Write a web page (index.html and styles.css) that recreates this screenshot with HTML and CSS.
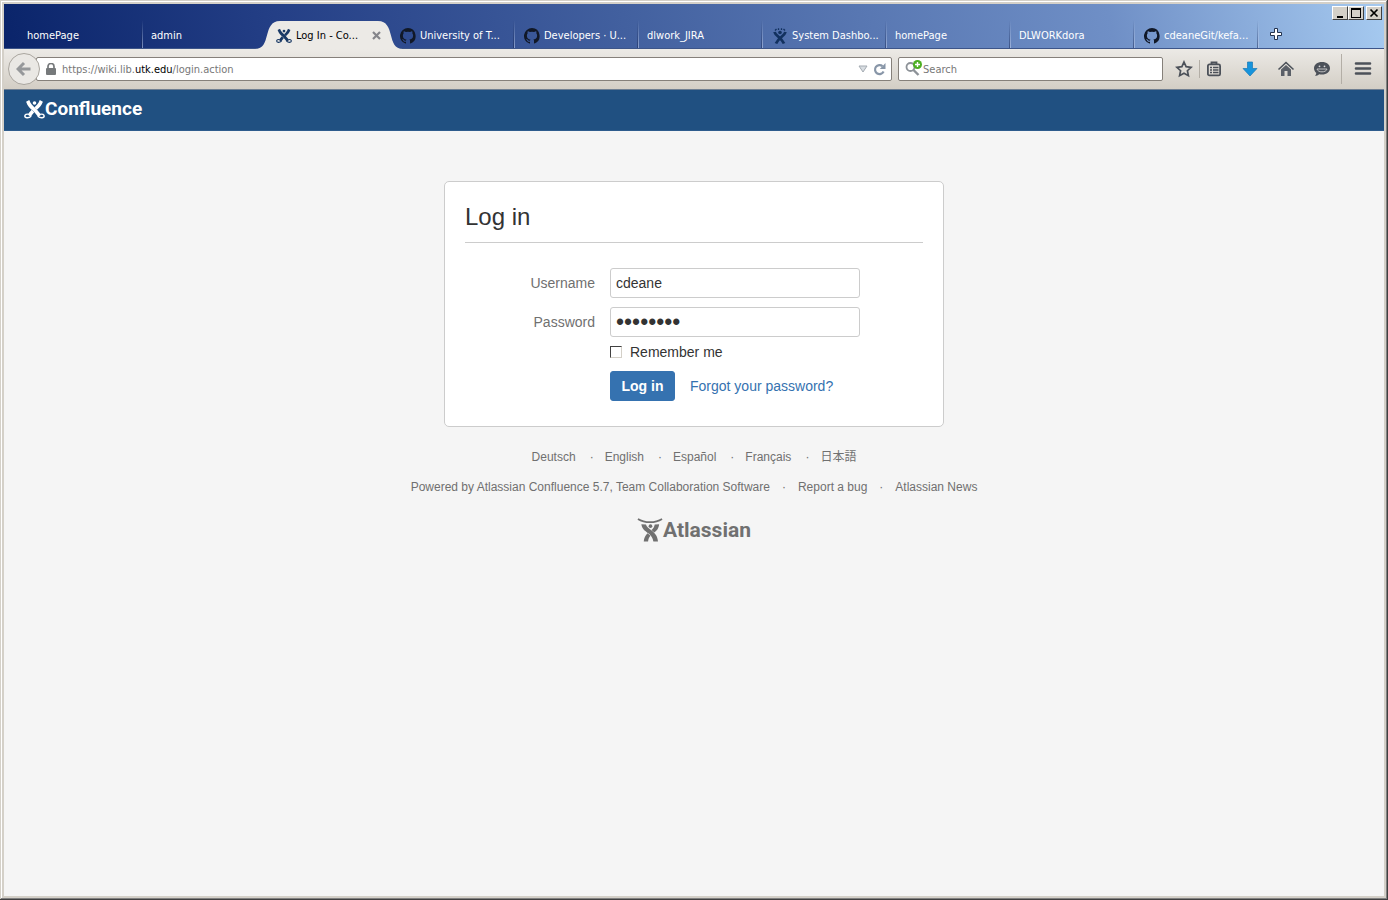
FILE: index.html
```
<!DOCTYPE html>
<html lang="en">
<head>
<meta charset="utf-8">
<title>Log In - Confluence</title>
<link rel="stylesheet" href="styles.css">
</head>
<body>
<svg class="defs" aria-hidden="true">
  <symbol id="github" viewBox="0 0 16 16"><path fill="#111827" d="M8 0a8 8 0 0 0-2.5 15.6c.4.1.5-.2.5-.4v-1.5c-2.200.5-2.700-1-2.700-1-.4-.9-.9-1.200-.9-1.200-.7-.5.1-.5.1-.5.8.1 1.200.8 1.200.8.7 1.300 1.900.9 2.300.7.1-.5.3-.9.5-1.100-1.800-.2-3.600-.9-3.600-4 0-.9.3-1.600.8-2.100-.1-.2-.4-1 .1-2.100 0 0 .7-.2 2.200.8a7.500 7.500 0 0 1 4 0c1.500-1 2.200-.8 2.200-.8.4 1.100.2 1.900.1 2.100.5.6.8 1.300.8 2.100 0 3.100-1.900 3.700-3.700 3.900.3.300.6.8.6 1.500v2.200c0 .2.100.5.600.4A8 8 0 0 0 8 0z"/></symbol>
  <symbol id="confluence" viewBox="0 0 20 18"><g fill="currentColor"><path d="M2 1.500L5 0c1.500 4 3.500 5.300 6 7.800 2.200 2.200 3.500 3.700 5.300 6.200l-2.800 2.200c-1.700-2.600-3-4-5-6C5.500 7.600 3.500 5.800 2 1.500z"/><path d="M18 1.500L15 0c-1.300 3.600-3 5-5 6.800l2.300 2.400C15 6.900 16.700 5 18 1.500zM7.300 9.200C5.800 10.700 4.800 12 3.700 14l2.800 2.200c1-1.800 1.900-3 3.200-4.500z"/><circle cx="10" cy="2.800" r="1.700"/></g><path d="M4.500 13.600C2.500 13 .8 14 .8 15.200c0 2 3.600 2.500 6 .2M15.500 13.600c2-.6 3.700.4 3.700 1.600 0 2-3.600 2.500-6 .2" fill="none" stroke="currentColor" stroke-width="1.400"/></symbol>
</svg>
<div class="window">
  <header class="titlebar">
    <nav class="tabs" aria-label="Tabs">
      <a class="tab" href="#"><span>homePage</span></a>
      <a class="tab" href="#"><span>admin</span></a>
      <a class="tab active" href="#">
        <svg class="tab-shape" viewBox="0 0 150 29"><path d="M0 29C17 29 7 1 25 1H123C141 1 131 29 148 29Z" fill="#eceae6"/></svg>
        <svg class="favicon navy" viewBox="0 0 20 18"><use href="#confluence"/></svg>
        <span>Log In - Co...</span>
        <svg class="close" viewBox="0 0 9 9"><path d="M1 1l7 7M8 1l-7 7" stroke="#85858a" stroke-width="2.200"/></svg>
      </a>
      <a class="tab" href="#"><svg class="favicon"><use href="#github"/></svg><span>University of T...</span></a>
      <a class="tab" href="#"><svg class="favicon"><use href="#github"/></svg><span>Developers · U...</span></a>
      <a class="tab" href="#"><span>dlwork_JIRA</span></a>
      <a class="tab" href="#"><svg class="favicon" viewBox="0 0 16 16"><g fill="none" stroke="#12315f" stroke-width="2.800"><path d="M2.500 4C3.500 8 9.500 9.500 12 15.500"/><path d="M13.500 4C12.500 8 6.500 9.500 4 15.500"/></g><path d="M3 2.500l1.500-1.500M6.500 2V.3M9.500 2V.3M13 2.500l-1.500-1.500" stroke="#12315f" stroke-width="1.300"/><circle cx="8" cy="4.500" r="1.800" fill="#12315f"/></svg><span>System Dashbo...</span></a>
      <a class="tab" href="#"><span>homePage</span></a>
      <a class="tab" href="#"><span>DLWORKdora</span></a>
      <a class="tab" href="#"><svg class="favicon"><use href="#github"/></svg><span>cdeaneGit/kefa...</span></a>
      <button class="newtab" aria-label="New tab"><svg width="12" height="12" viewBox="0 0 12 12"><path d="M4.500.5h3v4h4v3h-4v4h-3v-4h-4v-3h4z" fill="#fff" stroke="#23334f"/></svg></button>
    </nav>
    <div class="controls">
      <button aria-label="Minimize"><svg viewBox="0 0 14 12"><path d="M4 9h6v2H4z"/></svg></button>
      <button aria-label="Maximize"><svg viewBox="0 0 14 12"><path fill-rule="evenodd" d="M2 1h10v10H2zM3 3v7h8V3z"/></svg></button>
      <button class="quit" aria-label="Close"><svg viewBox="0 0 14 12"><path d="M3.500 2.500l7 7M10.500 2.500l-7 7" stroke="#000" stroke-width="1.700"/></svg></button>
    </div>
  </header>

  <div class="toolbar">
    <button class="back" aria-label="Back"><svg width="16" height="16" viewBox="0 0 16 16"><path d="M14.500 8H3M8 2L2 8l6 6" fill="none" stroke="#96989a" stroke-width="3"/></svg></button>
    <div class="address">
      <svg width="10" height="12" viewBox="0 0 10 12"><path d="M2 6V3.500a3 3 0 0 1 6 0V6" fill="none" stroke="#76797b" stroke-width="1.700"/><rect y="5" width="10" height="7" rx="1" fill="#76797b"/></svg>
      <a class="url" href="#">https://wiki.lib.<b>utk.edu</b>/login.action</a>
      <svg width="10" height="8" viewBox="0 0 10 8"><path d="M1 1h8L5 7z" fill="#d8dde2" stroke="#a4abb2"/></svg>
      <button class="plain" aria-label="Reload"><svg width="13" height="13" viewBox="0 0 13 13"><path d="M9.500 3.200A4.500 4.500 0 1 0 10.600 8.500" fill="none" stroke="#8896a8" stroke-width="2.200"/><path d="M12.500 0v6H6.800z" fill="#8896a8"/></svg></button>
    </div>
    <div class="search">
      <svg width="18" height="18" viewBox="0 0 18 18"><circle cx="5.500" cy="7" r="4" fill="none" stroke="#8d9298" stroke-width="1.800"/><path d="M8.500 10l5 5" stroke="#8d9298" stroke-width="2.400"/><circle cx="12.500" cy="4.500" r="4.500" fill="#4caf22"/><path d="M12.500 2v5M10 4.500h5" stroke="#fff" stroke-width="1.400"/></svg>
      <input type="search" placeholder="Search" aria-label="Search">
    </div>
    <div class="tools">
      <button class="plain" aria-label="Bookmark"><svg viewBox="0 0 18 18"><path d="M9 2l2.100 4.700 5 .6-3.700 3.400 1 5L9 13.200l-4.400 2.500 1-5L1.900 7.300l5-.6z" fill="none" stroke="#4c5159" stroke-width="1.700"/></svg></button>
      <i class="sep short"></i>
      <button class="plain" aria-label="Bookmarks list"><svg viewBox="0 0 18 18"><path d="M6.500 4V2.500h5V4" fill="none" stroke="#4c5159" stroke-width="1.800"/><rect x="2.900" y="4.400" width="12.200" height="11" rx="1.500" fill="none" stroke="#4c5159" stroke-width="1.800"/><path d="M5 7.500h2M8 7.500h5.500M5 10h2M8 10h5.500M5 12.500h2M8 12.500h5.500" stroke="#4c5159" stroke-width="1.300"/></svg></button>
      <button class="plain" aria-label="Downloads"><svg viewBox="0 0 18 18"><path d="M6.500 2h5v6.500H16L9 16 2 8.500h4.500z" fill="#1694dc" stroke="#1779b5" stroke-width=".7"/></svg></button>
      <button class="plain" aria-label="Home"><svg viewBox="0 0 18 18"><path d="M1.500 9.500L9 2.500l7.500 7" fill="none" stroke="#4c5159" stroke-width="1.600"/><path d="M4 9.500l5-4.600 5 4.600V16h-3.500v-5h-3v5H4z" fill="#5b6068"/></svg></button>
      <button class="plain" aria-label="Chat"><svg viewBox="0 0 18 18"><path d="M9 2c4.700 0 8 2.700 8 6.300s-3.300 6.300-8 6.300c-1 0-2-.1-2.900-.4-1 1-2.500 1.600-4.100 1.600.8-.8 1.200-1.700 1.300-2.900C1.800 11.700 1 10.200 1 8.300 1 4.700 4.300 2 9 2z" fill="#4c5159"/><circle cx="6.500" cy="6.300" r=".9" fill="#ddd"/><circle cx="11.500" cy="6.300" r=".9" fill="#ddd"/><path d="M4 9h10c-.8 3.800-9.200 3.800-10 0z" fill="none" stroke="#ccc" stroke-width=".9"/></svg></button>
      <i class="sep"></i>
      <button class="plain" aria-label="Menu"><svg viewBox="0 0 18 18"><path d="M2 3.500h14M2 8.500h14M2 13.500h14" stroke="#4c5159" stroke-width="2.600" stroke-linecap="round"/></svg></button>
    </div>
  </div>

  <div class="site-header">
    <a class="logo" href="#"><svg width="21" height="19" viewBox="0 0 20 18"><use href="#confluence"/></svg><span>Confluence</span></a>
  </div>

  <main class="page">
    <form class="card">
      <h1>Log in</h1>
      <div class="fields">
        <label for="user">Username</label>
        <input class="text" id="user" type="text" value="cdeane">
        <label for="pass">Password</label>
        <input class="text password" id="pass" type="password" value="password">
      </div>
      <div class="remember"><input type="checkbox" id="remember"><label for="remember">Remember me</label></div>
      <div class="actions"><button type="button" class="submit">Log in</button><a href="#">Forgot your password?</a></div>
    </form>
    <footer>
      <ul class="languages">
        <li><a href="#">Deutsch</a></li>
        <li><a href="#">English</a></li>
        <li><a href="#">Español</a></li>
        <li><a href="#">Français</a></li>
        <li><a href="#">日本語</a></li>
      </ul>
      <ul class="about">
        <li>Powered by <a href="#">Atlassian Confluence</a> 5.7, <a href="#">Team Collaboration Software</a></li>
        <li><a href="#">Report a bug</a></li>
        <li><a href="#">Atlassian News</a></li>
      </ul>
      <a class="atlassian" href="#"><svg width="26" height="26" viewBox="0 0 27 26"><path d="M1 1.500C8 6 19 6 26 1.500" fill="none" stroke="#707070" stroke-width="1.800"/><path d="M4.500 7c1 6 4.500 7 8 10 2 2 4 4.500 4.500 8h4.800c-.5-6-3.300-9-7.300-12C11.500 10.700 10 9.500 9.300 7.300z" fill="#707070"/><path d="M23 7c-.7 5-2.500 6.500-5 8.500l-2.900-2.600c2-1.600 2.900-3.200 3.300-5.600zM11 16.500l3 2.600c-1.500 1.700-2.200 3.400-2.500 5.900H7c.3-3.500 1.500-6.200 4-8.500z" fill="#707070"/><circle cx="14" cy="9" r="1.900" fill="#707070"/></svg><span>Atlassian</span></a>
    </footer>
  </main>
</div>
</body>
</html>
```
FILE: styles.css
```
* { box-sizing: border-box; }
body { margin: 0; font-family: "Liberation Sans", Arial, "Noto Sans CJK JP", sans-serif; font-size: 14px; color: #333; }
a { color: inherit; text-decoration: none; }
button { font: inherit; padding: 0; }
.defs { position: absolute; width: 0; height: 0; }

.window {
  display: flex; flex-direction: column; min-height: 100vh; padding: 4px;
  background: #d4d0c8;
  box-shadow: inset -1px -1px #404040, inset 1px 1px #d4d0c8, inset -2px -2px #808080, inset 2px 2px #fff;
}

.titlebar {
  display: flex; justify-content: space-between; align-items: flex-end; height: 45px; padding-left: 15px;
  background: linear-gradient(78deg, #0a246a, #243f86 20%, #42609f 45%, #6f8fc6 80%, #a6caf0);
  border-bottom: 1px solid #3d5589;
}
.tabs { display: flex; flex: 1; min-width: 0; }
.tab {
  position: relative; display: flex; align-items: center; flex: 0 1 124px; min-width: 0; height: 28px; padding: 3px 0 0 8px;
  color: #fff; font: 11px/16px "DejaVu Sans Condensed", "Noto Sans", sans-serif; white-space: nowrap;
  background: linear-gradient(rgba(190, 205, 235, 0), rgba(190, 205, 235, .6)) right / 1px 100% no-repeat,
    linear-gradient(rgba(20, 35, 80, 0), rgba(20, 35, 80, .5)) right 1px top / 1px 100% no-repeat;
}
.tab:nth-child(2) { background: none; }
.tab.active { z-index: 1; color: #000; background: none; }
.tab-shape { position: absolute; left: -12px; bottom: -1px; width: 150px; height: 29px; z-index: -1; }
.favicon { flex: none; width: 16px; height: 16px; margin: 0 4px 0 1px; }
.favicon.navy { color: #1a3a66; }
.close { width: 9px; height: 9px; margin: 0 10px 0 auto; }
.newtab { width: 34px; height: 28px; border: 0; background: none; display: flex; align-items: center; justify-content: center; }
.controls { display: flex; align-self: flex-start; padding: 2px 2px 0 0; }
.controls button {
  width: 16px; height: 14px; background: #d4d0c8; border: 1px solid; border-color: #fff #404040 #404040 #fff;
  display: flex;
}
.controls .quit { margin-left: 2px; }
.controls svg { width: 100%; height: 100%; }

.toolbar {
  display: flex; align-items: center; height: 41px; padding: 0 4px;
  background: linear-gradient(#eceae6, #d3cec5); border-bottom: 1px solid #6f7f92;
}
.back {
  z-index: 1; display: flex; align-items: center; justify-content: center; flex: none; width: 32px; height: 32px;
  border: 1px solid #aaa69f; border-radius: 50%; background: #eae8e4;
}
.address, .search { display: flex; align-items: center; height: 24px; background: #fff; border: 1px solid #85807a; border-radius: 2px; }
.address { flex: 1; min-width: 0; margin-left: -4px; padding: 0 5px 0 9px; font: 11px/16px "DejaVu Sans Condensed", "Noto Sans", sans-serif; }
.url { flex: 1; margin-left: 6px; padding-top: 2px; color: #777; }
.url b { font-weight: 400; color: #000; }
.plain { border: 0; background: none; display: flex; align-items: center; justify-content: center; }
.address .plain { margin-left: 5px; }
.search { width: 265px; margin-left: 6px; padding-left: 6px; }
.search input { flex: 1; min-width: 0; border: 0; padding: 2px 0 0; outline: 0; background: none; font: 11px/16px "DejaVu Sans Condensed", "Noto Sans", sans-serif; }
.search input::placeholder { color: #777; opacity: 1; }
.tools { display: flex; align-items: center; padding-left: 12px; }
.tools .plain { width: 18px; height: 24px; margin-right: 18px; }
.tools .plain:first-child { margin-right: 6px; }
.tools .plain:last-child { margin: 0 8px 0 12px; }
.tools svg { width: 18px; height: 18px; }
.sep { width: 1px; height: 30px; margin-left: -8px; background: #b3aea6; }
.sep.short { height: 18px; margin: 0 5px 0 0; }

.site-header { display: flex; align-items: center; height: 41px; padding: 0 20px 2px; background: #205081; border-bottom: 1px solid #2e5c8d; }
.logo { display: flex; align-items: center; color: #fff; font: 700 19px/24px Roboto, sans-serif; }

.page { flex: 1; padding: 50px 20px 20px; background: #f5f5f5; }
.card { max-width: 500px; margin: 0 auto; padding: 20px 20px 25px; background: #fff; border: 1px solid #ccc; border-radius: 5px; }
h1 { margin: 0 0 25px; padding-bottom: 10px; border-bottom: 1px solid #ccc; font-size: 24px; line-height: 30px; font-weight: 400; }
.fields { display: grid; grid-template-columns: 130px minmax(0, 250px); gap: 9px 15px; align-items: center; }
.fields label { text-align: right; color: #707070; }
.text { width: 100%; height: 30px; padding: 4px 5px; border: 1px solid #ccc; border-radius: 3px; background: #fff; font: inherit; color: #333; }
.text.password { padding: 0 5px; font-size: 23px; }
.remember, .actions { display: flex; align-items: center; margin-left: 145px; }
.remember { height: 20px; margin-top: 5px; }
.remember input { appearance: none; width: 12px; height: 12px; margin: 0 8px 0 0; background: #fff; border: 1px solid; border-color: #404040 #d4d0c8 #d4d0c8 #404040; }
.actions { margin-top: 9px; gap: 15px; color: #3572b0; }
.submit { min-width: 65px; height: 30px; padding: 0 10px; border: 1px solid #3572b0; border-radius: 3px; background: #3572b0; color: #fff; font-weight: 700; }

footer { color: #707070; font-size: 12px; line-height: 20px; text-align: center; }
footer ul { display: flex; flex-wrap: wrap; justify-content: center; margin: 20px 0 10px; padding: 0; list-style: none; }
.about { margin-top: 0; }
li + li::before { content: "·"; margin: 0 12px; }
.languages li + li::before { margin: 0 11px 0 14px; }
.atlassian { display: inline-flex; align-items: center; margin-top: 9px; font: 700 21px/28px Roboto, sans-serif; }
```
